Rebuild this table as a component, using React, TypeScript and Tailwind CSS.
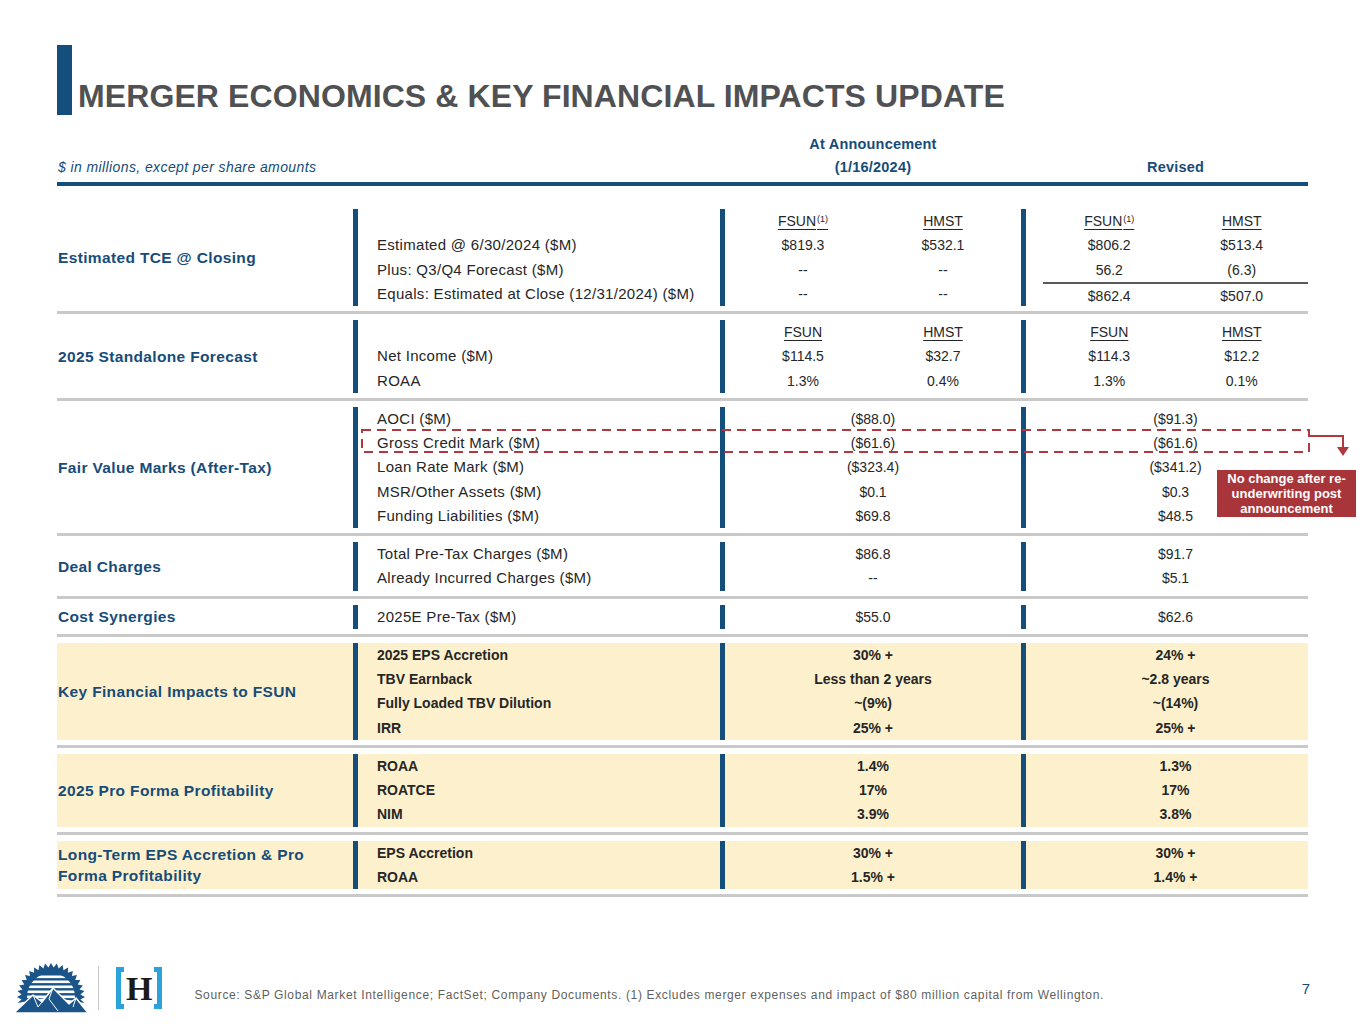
import React from "react";

type Val = string | [string, string];
type Row = { label?: string; ann: Val; rev: Val; head?: boolean; sup?: boolean; ruleAbove?: boolean };

const blue = "bg-[#134e7c]";

const HeadCell = ({ name, sup }: { name: string; sup?: boolean }) => (
  <span className="underline underline-offset-[3px] decoration-1">
    {name}
    {sup && <sup className="text-[9px] ml-[1px]">(1)</sup>}
  </span>
);

const ValCell = ({ v, head, sup, rule }: { v: Val; head?: boolean; sup?: boolean; rule?: boolean }) => {
  if (typeof v === "string") return <div className="text-center h-[24.25px]">{v}</div>;
  return (
    <div className={`grid grid-cols-2 text-center h-[24.25px] ${rule ? "border-t-2 border-[#595959]" : ""}`}>
      {head ? <HeadCell name={v[0]} sup={sup} /> : <span>{v[0]}</span>}
      {head ? <HeadCell name={v[1]} /> : <span>{v[1]}</span>}
    </div>
  );
};

const Section = ({
  title,
  rows,
  hi,
  top = "pt-[6px]",
}: {
  title: React.ReactNode;
  rows: Row[];
  hi?: boolean;
  top?: string;
}) => (
  <div className={`${top} pb-[5px] border-b-[3px] border-[#c9c9c9]`}>
    <div
      className={`grid grid-cols-[296px_5px_362px_5px_296px_5px_1fr] ${hi ? "bg-[#fdf1cd] font-bold" : ""}`}
    >
      <div className="flex items-center text-[#174c78] font-bold text-[15.5px] tracking-[0.35px] leading-[21px] pl-[1px]">
        {title}
      </div>
      <div className={blue} />
      <div className={`pl-[19px] ${hi ? "" : "text-[15px] tracking-[0.3px]"}`}>
        {rows.map((r, i) => (
          <div key={i} className="h-[24.25px]">{r.label ?? ""}</div>
        ))}
      </div>
      <div className={blue} />
      <div className="px-[8px]">
        {rows.map((r, i) => (
          <ValCell key={i} v={r.ann} head={r.head} sup={r.sup} />
        ))}
      </div>
      <div className={blue} />
      <div className="pl-[17px]">
        {rows.map((r, i) => (
          <ValCell key={i} v={r.rev} head={r.head} sup={r.sup} rule={r.ruleAbove} />
        ))}
      </div>
    </div>
  </div>
);

const SunLogo = () => {
  const pts: string[] = [];
  const cx = 38,
    cy = 34,
    n = 40;
  const start = (170 * Math.PI) / 180;
  const span = (200 * Math.PI) / 180;
  for (let i = 0; i <= n; i++) {
    const a = start + (span * i) / n;
    const rr = i % 2 === 0 ? 34 : 29.5;
    pts.push(`${(cx + rr * Math.cos(a)).toFixed(1)},${(cy + rr * Math.sin(a)).toFixed(1)}`);
  }
  return (
    <svg width="76" height="50" viewBox="0 0 76 50">
      <defs>
        <clipPath id="inner">
          <circle cx="38" cy="34" r="24" />
        </clipPath>
      </defs>
      <polygon points={`${cx},${cy} ${pts.join(" ")}`} fill="#1a5488" />
      <g clipPath="url(#inner)">
        {[12.5, 17.5, 22.5, 27.5, 32.5, 37.5].map((y) => (
          <rect key={y} x="0" y={y} width="76" height="2.6" fill="#ffffff" />
        ))}
      </g>
      <polygon
        points="1,50 20,32 29,39 40,25 56,41 63,35 75,50"
        fill="#1a5488"
        stroke="#ffffff"
        strokeWidth="1.4"
        strokeLinejoin="round"
      />
      <polyline points="20,32 25,44 29,39" fill="none" stroke="#ffffff" strokeWidth="1" />
      <polyline points="40,25 36,36 45,48" fill="none" stroke="#ffffff" strokeWidth="1" />
      <polyline points="63,35 60,44" fill="none" stroke="#ffffff" strokeWidth="1" />
    </svg>
  );
};

const HLogo = () => (
  <div className="flex items-center h-[44px]">
    <div className="w-[8px] h-[42px] border-l-[5px] border-t-[5px] border-b-[5px] border-[#2aa2da]" />
    <span className="font-['Liberation_Serif',serif] font-bold text-[34px] leading-none text-[#1b1b1b] px-[2px] mt-[2px]">
      H
    </span>
    <div className="w-[8px] h-[42px] border-r-[5px] border-t-[5px] border-b-[5px] border-[#2aa2da]" />
  </div>
);

export default function App() {
  return (
    <div className="relative w-[1365px] h-[1024px] bg-white flex flex-col font-['Liberation_Sans',Arial,sans-serif] text-[14px] leading-[24.25px] text-[#262626]">
      {/* title */}
      <div className="flex items-end pl-[57px] pt-[45px] h-[115px]">
        <div className="w-[15px] h-[70px] bg-[#134e7c]" />
        <h1 className="ml-[6px] mb-[1px] font-bold text-[32px] leading-[36px] text-[#505153] tracking-[0.1px]">
          MERGER ECONOMICS &amp; KEY FINANCIAL IMPACTS UPDATE
        </h1>
      </div>

      <div className="ml-[57px] w-[1251px]">
        {/* header */}
        <div className="grid grid-cols-[296px_5px_362px_5px_296px_5px_1fr] items-end pt-[18px] pb-[3px] border-b-4 border-[#134e7c] text-[#174c78] text-[14.5px] tracking-[0.2px] leading-[23px]">
          <div className="col-span-3 italic font-normal text-[14px] tracking-[0.4px] pl-[1px]">
            $ in millions, except per share amounts
          </div>
          <div />
          <div className="text-center font-bold">
            At Announcement
            <br />
            (1/16/2024)
          </div>
          <div />
          <div className="text-center font-bold pl-[17px]">Revised</div>
        </div>

        <Section
          top="pt-[23px]"
          title="Estimated TCE @ Closing"
          rows={[
            { ann: ["FSUN", "HMST"], rev: ["FSUN", "HMST"], head: true, sup: true },
            { label: "Estimated @ 6/30/2024 ($M)", ann: ["$819.3", "$532.1"], rev: ["$806.2", "$513.4"] },
            { label: "Plus: Q3/Q4 Forecast ($M)", ann: ["--", "--"], rev: ["56.2", "(6.3)"] },
            { label: "Equals: Estimated at Close (12/31/2024) ($M)", ann: ["--", "--"], rev: ["$862.4", "$507.0"], ruleAbove: true },
          ]}
        />
        <Section
          title="2025 Standalone Forecast"
          rows={[
            { ann: ["FSUN", "HMST"], rev: ["FSUN", "HMST"], head: true },
            { label: "Net Income ($M)", ann: ["$114.5", "$32.7"], rev: ["$114.3", "$12.2"] },
            { label: "ROAA", ann: ["1.3%", "0.4%"], rev: ["1.3%", "0.1%"] },
          ]}
        />
        <Section
          title="Fair Value Marks (After-Tax)"
          rows={[
            { label: "AOCI ($M)", ann: "($88.0)", rev: "($91.3)" },
            { label: "Gross Credit Mark ($M)", ann: "($61.6)", rev: "($61.6)" },
            { label: "Loan Rate Mark ($M)", ann: "($323.4)", rev: "($341.2)" },
            { label: "MSR/Other Assets ($M)", ann: "$0.1", rev: "$0.3" },
            { label: "Funding Liabilities ($M)", ann: "$69.8", rev: "$48.5" },
          ]}
        />
        <Section
          title="Deal Charges"
          rows={[
            { label: "Total Pre-Tax Charges ($M)", ann: "$86.8", rev: "$91.7" },
            { label: "Already Incurred Charges ($M)", ann: "--", rev: "$5.1" },
          ]}
        />
        <Section title="Cost Synergies" rows={[{ label: "2025E Pre-Tax ($M)", ann: "$55.0", rev: "$62.6" }]} />
        <Section
          hi
          title="Key Financial Impacts to FSUN"
          rows={[
            { label: "2025 EPS Accretion", ann: "30% +", rev: "24% +" },
            { label: "TBV Earnback", ann: "Less than 2 years", rev: "~2.8 years" },
            { label: "Fully Loaded TBV Dilution", ann: "~(9%)", rev: "~(14%)" },
            { label: "IRR", ann: "25% +", rev: "25% +" },
          ]}
        />
        <Section
          hi
          title="2025 Pro Forma Profitability"
          rows={[
            { label: "ROAA", ann: "1.4%", rev: "1.3%" },
            { label: "ROATCE", ann: "17%", rev: "17%" },
            { label: "NIM", ann: "3.9%", rev: "3.8%" },
          ]}
        />
        <Section
          hi
          title={
            <span>
              Long-Term EPS Accretion &amp; Pro
              <br />
              Forma Profitability
            </span>
          }
          rows={[
            { label: "EPS Accretion", ann: "30% +", rev: "30% +" },
            { label: "ROAA", ann: "1.5% +", rev: "1.4% +" },
          ]}
        />
      </div>

      {/* footer */}
      <div className="mt-auto flex items-center pl-[13px] pb-[12px] h-[60px]">
        <SunLogo />
        <div className="w-[1px] h-[44px] bg-[#c8c8c8] ml-[9px] mr-[17px]" />
        <HLogo />
        <div className="ml-[32px] mt-[14px] text-[12px] tracking-[0.65px] leading-[14px] text-[#5f5f5f] whitespace-nowrap">
          Source: S&amp;P Global Market Intelligence; FactSet; Company Documents. (1) Excludes merger expenses and impact of $80 million capital from Wellington.
        </div>
        <div className="ml-auto mr-[55px] mt-[2px] text-[15px] text-[#174c78]">7</div>
      </div>

      {/* annotation overlay */}
      <svg className="absolute left-[355px] top-[425px]" width="1000" height="40" viewBox="0 0 1000 40">
        <rect x="7" y="5" width="947" height="22" fill="none" stroke="#b0383e" strokeWidth="2" strokeDasharray="9 6" />
        <polyline points="954,11 988,11 988,23" fill="none" stroke="#b0383e" strokeWidth="2" />
        <polygon points="982,22 994,22 988,31" fill="#b0383e" />
      </svg>
      <div className="absolute left-[1217px] top-[470px] w-[139px] h-[47px] bg-[#a8353a] text-white font-bold text-[13px] leading-[15px] text-center flex items-center justify-center px-[2px]">
        No change after re-underwriting post announcement
      </div>
    </div>
  );
}
